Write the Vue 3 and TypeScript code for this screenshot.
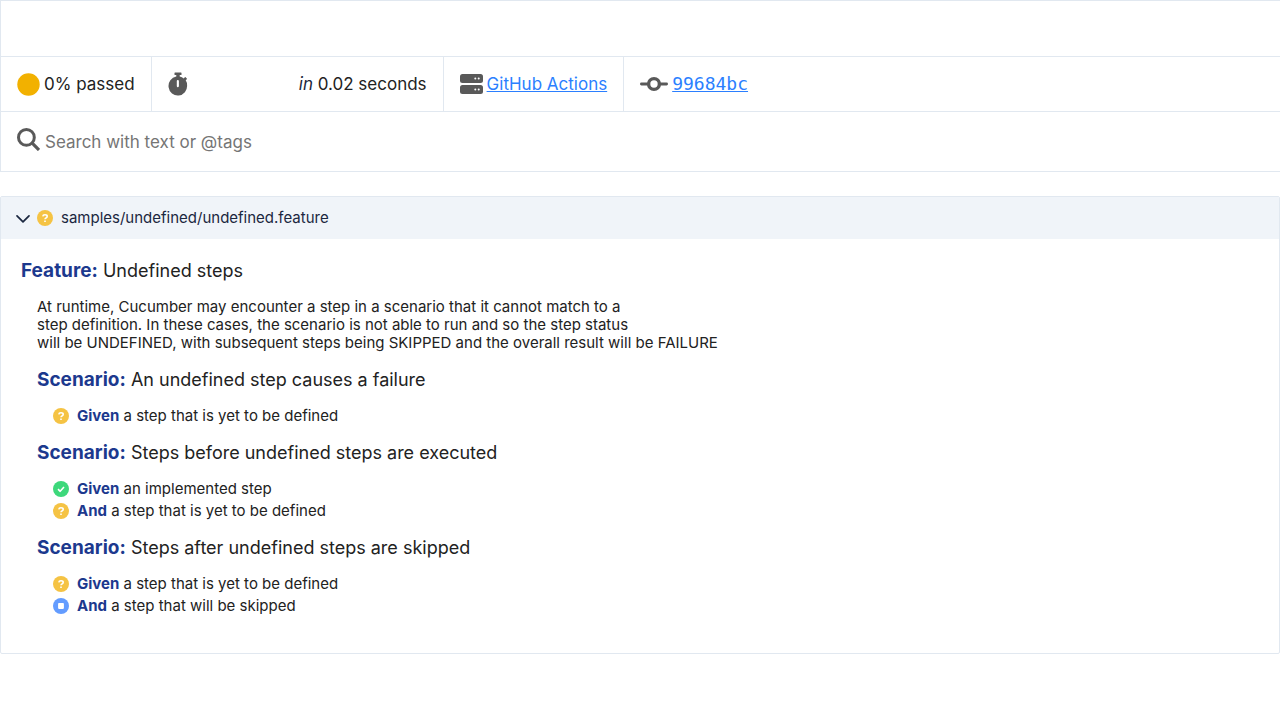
<script setup lang="ts">
import { ref } from 'vue'

type Status = 'undefined' | 'passed' | 'skipped'

interface Step {
  keyword: string
  text: string
  status: Status
}

interface Scenario {
  name: string
  steps: Step[]
}

const query = ref('')
const expanded = ref(true)

const description: string[] = [
  'At runtime, Cucumber may encounter a step in a scenario that it cannot match to a',
  'step definition. In these cases, the scenario is not able to run and so the step status',
  'will be UNDEFINED, with subsequent steps being SKIPPED and the overall result will be FAILURE',
]

const scenarios: Scenario[] = [
  {
    name: 'An undefined step causes a failure',
    steps: [{ keyword: 'Given', text: 'a step that is yet to be defined', status: 'undefined' }],
  },
  {
    name: 'Steps before undefined steps are executed',
    steps: [
      { keyword: 'Given', text: 'an implemented step', status: 'passed' },
      { keyword: 'And', text: 'a step that is yet to be defined', status: 'undefined' },
    ],
  },
  {
    name: 'Steps after undefined steps are skipped',
    steps: [
      { keyword: 'Given', text: 'a step that is yet to be defined', status: 'undefined' },
      { keyword: 'And', text: 'a step that will be skipped', status: 'skipped' },
    ],
  },
]

const colours: Record<Status, string> = {
  undefined: '#f5c344',
  passed: '#3dd87b',
  skipped: '#639cff',
}

const marks: Record<Status, string> = {
  undefined: 'M5.8 6.3Q6 4.7 8 4.7Q10.2 4.7 10.2 6.3Q10.2 7.4 9 7.9Q8 8.4 8 9.3M8 10.6V12',
  passed: 'M5 8.2L7.2 10.3L11 6',
  skipped: 'M5.9 5.9H10.1V10.1H5.9Z',
}
</script>

<template>
  <main class="report">
    <header class="summary">
      <div class="banner"></div>
      <ul class="facts">
        <li>
          <svg width="23" height="23" viewBox="0 0 23 23" aria-hidden="true">
            <circle cx="11.5" cy="11.5" r="11.2" fill="#f2b100" />
          </svg>
          <span>0% passed</span>
        </li>
        <li class="timing">
          <svg width="20" height="24" viewBox="0 0 20 24" aria-hidden="true">
            <path
              fill="#595959"
              fill-rule="evenodd"
              d="M6.5 1Q6.5 .5 7 .5H13Q13.5 .5 13.5 1V2.5Q13.5 3 13 3H11.7V4.6Q14 5 15.8 6.4L16.8 5.3Q17.2 4.9 17.6 5.3L18.8 6.4Q19.2 6.8 18.8 7.2L17.7 8.3Q19.1 10.3 19.1 13.4A9.3 9.5 0 1 1 8.3 4.6V3H7Q6.5 3 6.5 2.5ZM9.8 8Q8.8 8 8.8 9V14Q8.8 15.2 9.8 15.2T10.9 14V9Q10.9 8 9.8 8Z"
            />
          </svg>
          <span><i>in</i> 0.02 seconds</span>
        </li>
        <li>
          <svg width="23" height="22" viewBox="0 0 23 22" aria-hidden="true">
            <rect y="1" width="23" height="9" rx="2.5" fill="#595959" />
            <rect y="12" width="23" height="9" rx="2.5" fill="#595959" />
            <g fill="#fff">
              <circle cx="15.3" cy="5.5" r="1" />
              <circle cx="18.7" cy="5.5" r="1" />
              <circle cx="15.3" cy="16.5" r="1" />
              <circle cx="18.7" cy="16.5" r="1" />
            </g>
          </svg>
          <a href="#actions">GitHub Actions</a>
        </li>
        <li class="last">
          <svg width="28" height="22" viewBox="0 0 28 22" fill="none" stroke="#595959" aria-hidden="true">
            <path d="M1.4 11H8.2M19.8 11H26.6" stroke-width="2.8" stroke-linecap="round" />
            <circle cx="14" cy="11" r="5.4" stroke-width="3.4" />
          </svg>
          <a class="commit" href="#commit">99684bc</a>
        </li>
      </ul>
      <form class="search" role="search" @submit.prevent>
        <label for="query" aria-label="Search">
          <svg width="23" height="23" viewBox="0 0 23 23" fill="none" stroke="#595959" aria-hidden="true">
            <circle cx="9.4" cy="9.4" r="7.9" stroke-width="3" />
            <path d="M15.2 15.2L22 22" stroke-width="3.2" />
          </svg>
        </label>
        <input id="query" v-model="query" type="text" placeholder="Search with text or @tags" />
      </form>
    </header>

    <section class="document">
      <button class="toggle" type="button" :aria-expanded="expanded" @click="expanded = !expanded">
        <svg width="14" height="16" viewBox="0 0 14 16" fill="none" stroke="#1b2740" aria-hidden="true">
          <path d="M1 5.8L7 11.8L13 5.8" stroke-width="1.7" stroke-linecap="round" stroke-linejoin="round" />
        </svg>
        <svg width="16" height="16" viewBox="0 0 16 16" aria-hidden="true">
          <circle cx="8" cy="8" r="8" :fill="colours.undefined" />
          <path :d="marks.undefined" fill="none" stroke="#fff" stroke-width="1.6" />
        </svg>
        <span class="path">samples/undefined/undefined.feature</span>
      </button>

      <div v-if="expanded" class="feature">
        <h1><b>Feature:</b> Undefined steps</h1>
        <div class="children">
          <p><template v-for="(line, i) in description" :key="i">{{ line }}<br /></template></p>
          <section v-for="scenario in scenarios" :key="scenario.name">
            <h2><b>Scenario:</b> {{ scenario.name }}</h2>
            <ol class="steps">
              <li v-for="step in scenario.steps" :key="step.keyword">
                <svg width="16" height="16" viewBox="0 0 16 16" aria-hidden="true">
                  <circle cx="8" cy="8" r="8" :fill="colours[step.status]" />
                  <path
                    :d="marks[step.status]"
                    :fill="step.status === 'skipped' ? '#fff' : 'none'"
                    stroke="#fff"
                    stroke-width="1.6"
                    stroke-linejoin="round"
                  />
                </svg>
                <span><b>{{ step.keyword }}</b> {{ step.text }}</span>
              </li>
            </ol>
          </section>
        </div>
      </div>
    </section>
  </main>
</template>

<style>
body {
  margin: 0;
  background: #fff;
}
</style>

<style scoped>
.report {
  font-family: Inter, "Liberation Sans", sans-serif;
  font-size: 15px;
  line-height: 18px;
  color: #222;
}
svg {
  display: block;
  flex: none;
}
.summary {
  border: 1px solid #e1e8f0;
  border-right: 0;
  font-size: 17px;
  line-height: 22px;
}
.banner {
  height: 55px;
}
.facts {
  display: flex;
  margin: 0;
  padding: 0;
  list-style: none;
  border-top: 1px solid #e1e8f0;
  border-bottom: 1px solid #e1e8f0;
}
.facts li {
  display: flex;
  align-items: center;
  gap: 4px;
  min-height: 54px;
  padding: 0 16px;
  border-right: 1px solid #e1e8f0;
}
.facts .last {
  border-right: 0;
}
.facts .timing {
  min-width: 259px;
  justify-content: space-between;
}
i {
  color: #1b2740;
}
a {
  color: #2b7fff;
}
.commit {
  font-family: "DejaVu Sans Mono", monospace;
  font-size: 18px;
}
.search {
  display: flex;
  align-items: center;
  gap: 5px;
  padding: 16px;
}
.search label {
  padding-bottom: 4px;
}
.search input {
  flex: 1;
  padding: 0;
  border: 0;
  outline: 0;
  background: transparent;
  font: inherit;
  color: inherit;
}
.search input::placeholder {
  color: #757575;
}
.document {
  margin-top: 24px;
  border: 1px solid #e1e8f0;
  border-radius: 2px;
}
.toggle {
  display: flex;
  align-items: center;
  gap: 7px;
  width: 100%;
  padding: 12px 15px;
  border: 0;
  background: #f0f4f9;
  font: inherit;
  color: #1b2740;
  text-align: left;
}
.path {
  padding-left: 1px;
}
.feature {
  padding: 20px 20px 22px;
}
h1,
h2 {
  margin: 0;
  font-size: 18px;
  line-height: 23px;
  font-weight: 400;
}
b {
  font-weight: 700;
  color: #1c398e;
}
h1 b,
h2 b {
  font-size: 19px;
}
.children {
  padding-left: 16px;
}
p {
  margin: 16px 0;
}
.steps {
  display: grid;
  gap: 4px;
  margin: 16px 0;
  padding: 0 0 0 16px;
  list-style: none;
}
.steps li {
  display: flex;
  align-items: center;
  gap: 8px;
}
</style>
